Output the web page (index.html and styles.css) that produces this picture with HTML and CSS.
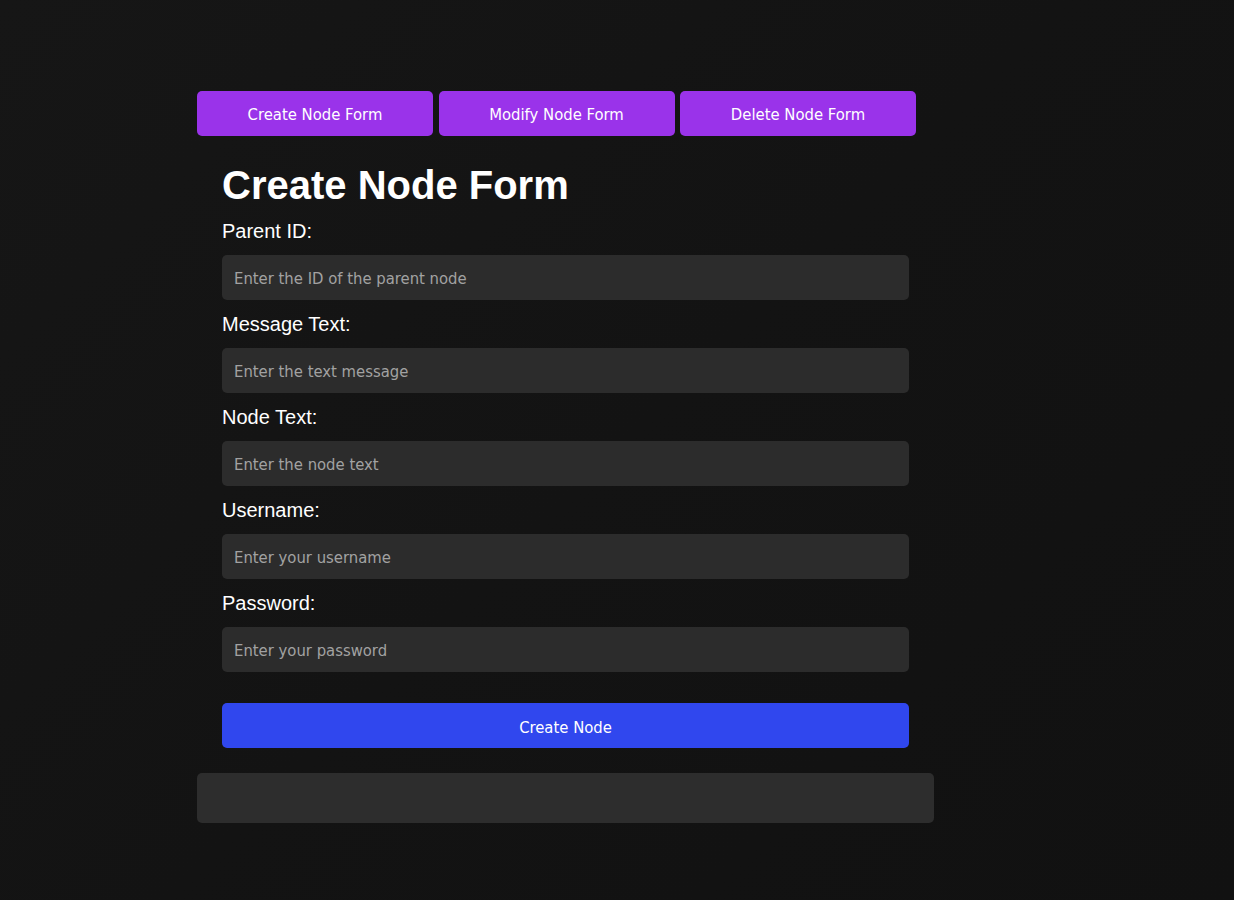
FILE: index.html
```html
<!DOCTYPE html>
<html lang="en">
<head>
<meta charset="utf-8">
<title>Node Forms</title>
<link rel="stylesheet" href="styles.css">
</head>
<body>
<div class="app">
  <div class="tabs">
    <button class="tab">Create Node Form</button>
    <button class="tab">Modify Node Form</button>
    <button class="tab">Delete Node Form</button>
  </div>
  <form class="form">
    <h1 class="title">Create Node Form</h1>
    <label class="label" for="parent">Parent ID:</label>
    <input class="field" id="parent" type="text" placeholder="Enter the ID of the parent node">
    <label class="label" for="msg">Message Text:</label>
    <input class="field" id="msg" type="text" placeholder="Enter the text message">
    <label class="label" for="node">Node Text:</label>
    <input class="field" id="node" type="text" placeholder="Enter the node text">
    <label class="label" for="user">Username:</label>
    <input class="field" id="user" type="text" placeholder="Enter your username">
    <label class="label" for="pass">Password:</label>
    <input class="field" id="pass" type="password" placeholder="Enter your password">
    <button class="submit" type="button">Create Node</button>
  </form>
  <div class="result"></div>
</div>
</body>
</html>
```

FILE: styles.css
```css
html, body {
  margin: 0;
  padding: 0;
  height: 100%;
}
body {
  background: linear-gradient(135deg, #161616 0%, #131313 50%, #111111 100%);
  color: #ffffff;
  font-family: "Liberation Sans", Arial, sans-serif;
  min-height: 900px;
}
.app {
  width: 737px;
  margin-left: 197px;
  padding-top: 91px;
}
.tabs {
  display: flex;
  gap: 5.5px;
}
.tab {
  width: 236px;
  height: 45px;
  border: none;
  border-radius: 5px;
  background: #9a33ea;
  color: #ffffff;
  font-family: "DejaVu Sans Condensed", Tahoma, sans-serif;
  font-size: 16.5px;
  padding: 2px 0 0;
}
.form {
  display: flex;
  flex-direction: column;
  padding: 26px 25px 25px;
}
.title {
  margin: 0 0 12px;
  font-size: 40px;
  line-height: 46px;
  font-weight: bold;
}
.label {
  font-size: 20px;
  line-height: 23px;
  margin-bottom: 12px;
}
.field {
  height: 45px;
  box-sizing: border-box;
  border: none;
  border-radius: 5px;
  background: #2c2c2c;
  color: #ffffff;
  padding: 2px 12px 0;
  margin: 0 0 13px;
  font-family: "DejaVu Sans Condensed", Tahoma, sans-serif;
  font-size: 16.5px;
  outline: none;
}
.field::placeholder {
  color: #a2a2a2;
}
.submit {
  margin-top: 18px;
  height: 45px;
  border: none;
  border-radius: 5px;
  background: #3047ee;
  color: #ffffff;
  font-family: "DejaVu Sans Condensed", Tahoma, sans-serif;
  font-size: 16.5px;
  padding: 3px 0 0;
}
.result {
  height: 50px;
  border-radius: 5px;
  background: #2d2d2d;
}
```
